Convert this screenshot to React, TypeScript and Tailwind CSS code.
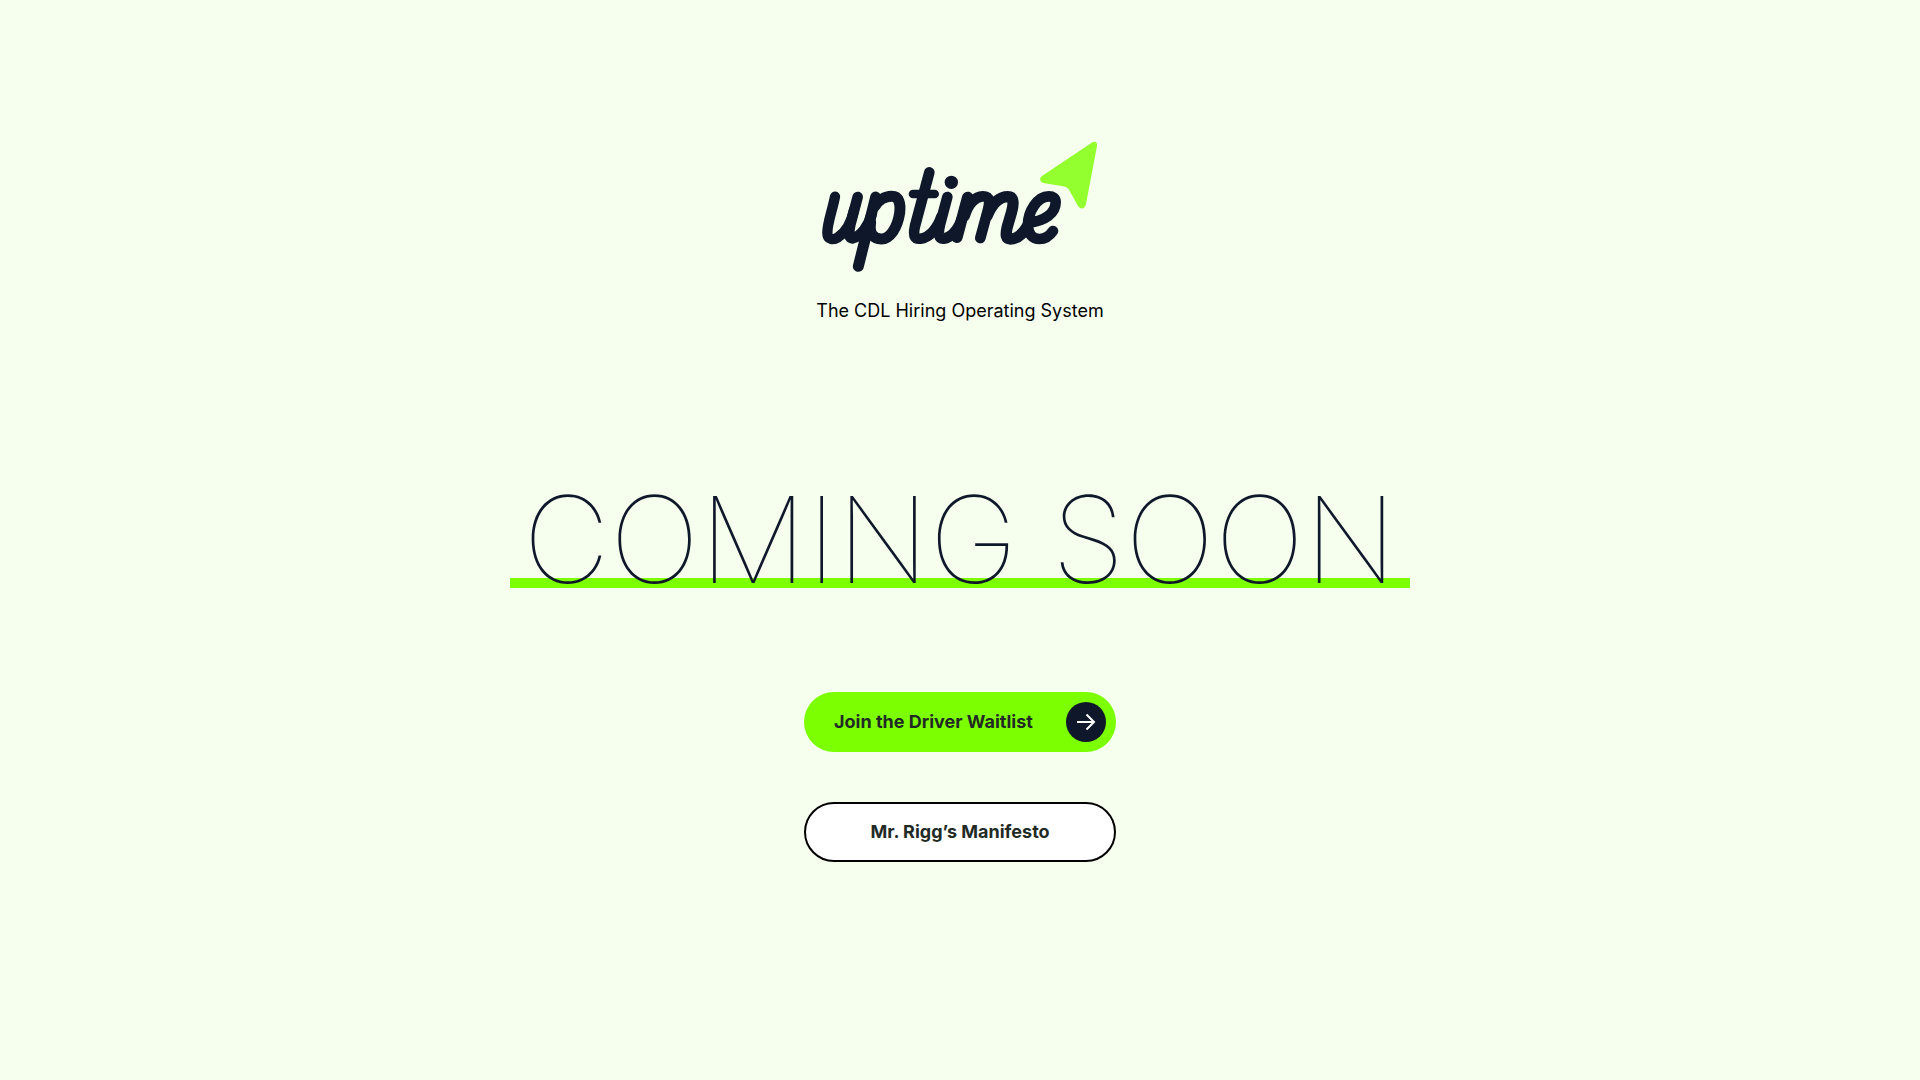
import React from "react";

function Logo() {
  return (
    <svg
      role="img"
      aria-label="uptime"
      viewBox="30 30 840 402"
      className="h-[134px] w-[280px]"
      fill="none"
      strokeLinecap="round"
      strokeLinejoin="round"
    >
      <g stroke="#0f172a" strokeWidth="32">
        <path d="M75 200C68 238 52 278 52 308C52 330 70 331 84 322C110 304 125 272 132 240" strokeWidth="31" />
        <path d="M143 201L121 284C115 313 117 326 128 325C152 320 176 288 185 252" />
        <path d="M197 201L145 409" strokeWidth="33" />
        <path d="M195 228C205 212 224 199 245 199C268 199 272 222 269 249C262 294 240 327 214 327C190 327 176 309 182 278" strokeWidth="33" />
        <path d="M358 127L315 288C308 321 316 328 331 326C358 323 382 296 394 260" />
        <path d="M309 192H374" strokeWidth="26" />
        <path d="M412 201L390 284C383 313 387 327 401 326C424 323 446 298 457 262" />
        <path d="M473 202L441 322" strokeWidth="34" />
        <path d="M464 258C475 221 496 199 518 199C541 199 540 216 533 243L511 324" strokeWidth="32" />
        <path d="M531 258C547 220 570 200 594 200C611 200 612 220 605 245L592 290C585 318 589 327 601 327C624 327 643 306 656 282" strokeWidth="34" />
        <path d="M656 278C704 274 737 250 737 216C737 204 729 199 716 199C682 199 654 245 654 284C654 314 668 327 689 327C709 327 722 313 729 303" />
      </g>
      <circle cx="424" cy="157" r="20" fill="#0f172a" />
      <path
        d="M845 38C854 32 863 36 861 48L828 222C825 238 811 239 804 228L784 192C776 175 773 171 755 168L704 160C690 157 686 146 696 138Z"
        fill="#93ff2e"
      />
    </svg>
  );
}

export default function App() {
  return (
    <main className="flex min-h-screen flex-col items-center bg-[#f6ffee] px-4 pt-[140px] pb-16 font-['Inter',sans-serif]">
      <Logo />
      <p className="mt-[23px] text-lg leading-7 text-black">The CDL Hiring Operating System</p>
      <h1 className="relative isolate mt-[155px] w-full max-w-[900px] text-center text-[120px] leading-[120px] font-thin whitespace-nowrap text-slate-900">
        <span className="absolute inset-x-0 bottom-3 -z-10 h-[10px] bg-[#7cff00]" />
        COMING SOON
      </h1>
      <div className="mt-[92px] flex w-full max-w-[312px] flex-col gap-[50px] text-lg font-bold text-[#222a26]">
        <button
          type="button"
          className="flex h-[60px] items-center justify-between rounded-full bg-[#7cff00] pr-[10px] pl-[30px]"
        >
          Join the Driver Waitlist
          <span className="flex size-10 items-center justify-center rounded-full bg-slate-900">
            <svg aria-hidden="true" viewBox="0 0 20 20" className="size-5" fill="none" stroke="white" strokeWidth="2">
              <path d="M1 10H18M10.5 2.5L18 10L10.5 17.5" strokeLinejoin="miter" />
            </svg>
          </span>
        </button>
        <button type="button" className="h-[60px] rounded-full border-2 border-black bg-white">
          Mr. Rigg’s Manifesto
        </button>
      </div>
    </main>
  );
}
